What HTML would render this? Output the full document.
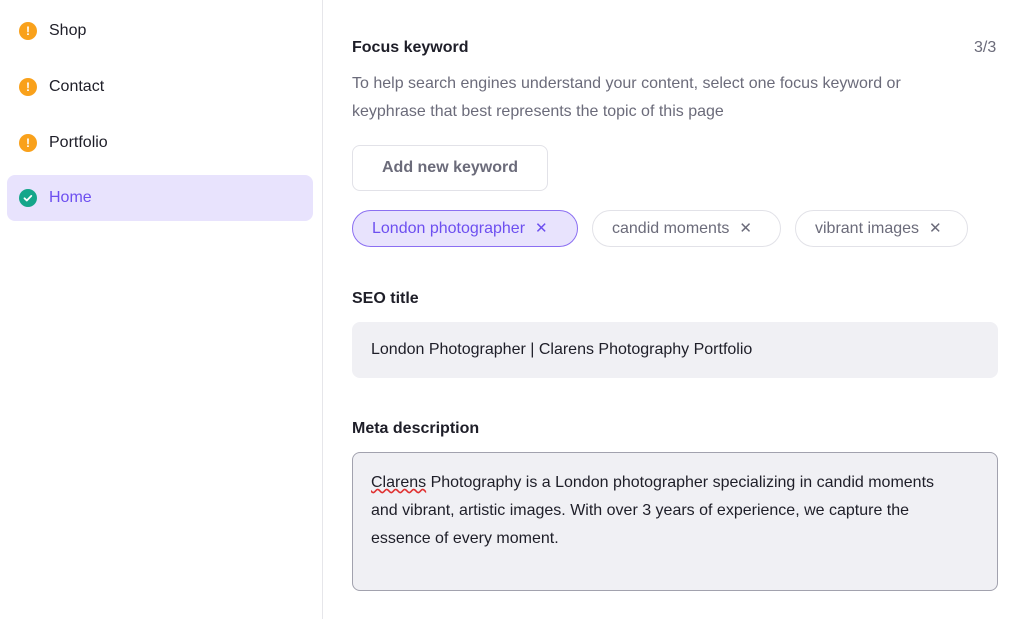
<!DOCTYPE html>
<html><head><style>
*{margin:0;padding:0;box-sizing:border-box}
body{width:1024px;height:619px;background:#fff;font-family:"Liberation Sans",sans-serif;color:#1e1e28;position:relative;overflow:hidden}
.side{position:absolute;left:0;top:0;width:323px;height:619px;border-right:1px solid #e6e6ea}
.item{position:absolute;left:7px;width:306px;height:46px;border-radius:8px;font-size:16px;line-height:46px;padding-left:42px;color:#1e1e28}
.item .ic{position:absolute;left:12px;top:14px;width:18px;height:18px;border-radius:50%;background:#f9a11b;color:#fff;font-size:12px;font-weight:bold;line-height:18px;text-align:center}
.item.act{background:#e8e3fd;color:#6d4ff0}
.item.act .ic{background:#14a68a}
.a{position:absolute}
.lbl{font-size:16px;font-weight:bold;color:#1e1e28}
.chip{position:absolute;top:210px;height:37px;border:1px solid #e2e2e8;border-radius:19px;font-size:16px;line-height:35px;padding-left:19px;color:#6b6b7a}
.chip span{margin-left:10px;font-size:15px}
</style></head><body>
<div class="side">
<div class="item" style="top:8px"><div class="ic">!</div>Shop</div>
<div class="item" style="top:64px"><div class="ic">!</div>Contact</div>
<div class="item" style="top:120px"><div class="ic">!</div>Portfolio</div>
<div class="item act" style="top:175px"><div class="ic"><svg width="18" height="18" viewBox="0 0 18 18"><path d="M5.5 9.3l2.3 2.2 4.5-4.6" stroke="#fff" stroke-width="1.8" fill="none" stroke-linecap="round" stroke-linejoin="round"/></svg></div>Home</div>
</div>
<div class="a lbl" style="left:352px;top:39px">Focus keyword</div>
<div class="a" style="left:974px;top:39px;font-size:16px;color:#6b6b7a">3/3</div>
<div class="a" style="left:352px;top:70px;width:620px;font-size:16px;line-height:28px;color:#6b6b7a">To help search engines understand your content, select one focus keyword or keyphrase that best represents the topic of this page</div>
<div class="a" style="left:352px;top:145px;width:196px;height:46px;border:1px solid #e2e2e8;border-radius:8px;text-align:center;line-height:44px;font-size:16px;font-weight:bold;color:#6b6b7a">Add new keyword</div>
<div class="chip" style="left:352px;width:226px;background:#e8e3fd;border-color:#8b6ff2;color:#6d4ff0">London photographer<span>✕</span></div>
<div class="chip" style="left:592px;width:189px">candid moments<span>✕</span></div>
<div class="chip" style="left:795px;width:173px">vibrant images<span>✕</span></div>
<div class="a lbl" style="left:352px;top:290px">SEO title</div>
<div class="a" style="left:352px;top:322px;width:646px;height:56px;background:#f0f0f4;border-radius:8px;padding-left:19px;line-height:56px;font-size:16px">London Photographer | Clarens Photography Portfolio</div>
<div class="a lbl" style="left:352px;top:420px">Meta description</div>
<div class="a" style="left:352px;top:452px;width:646px;height:139px;background:#f0f0f4;border:1px solid #a2a2ae;border-radius:8px;padding:16px 40px 16px 18px;font-size:16px;line-height:28px"><span style="text-decoration:underline wavy #e03030">Clarens</span> Photography is a London photographer specializing in candid moments and vibrant, artistic images. With over 3 years of experience, we capture the essence of every moment.</div>
</body></html>
